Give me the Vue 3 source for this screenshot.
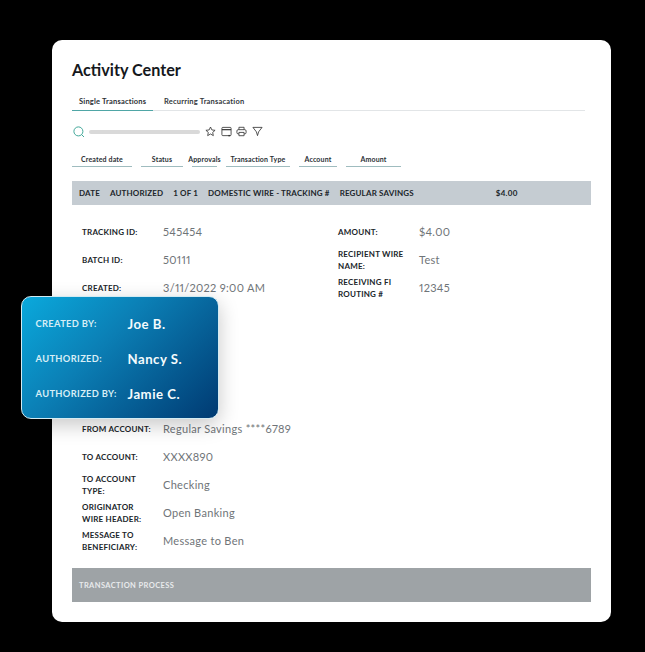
<script setup>
const filters = [
  { label: 'Created date', width: 60 },
  { label: 'Status', width: 42 },
  { label: 'Approvals', width: 25 },
  { label: 'Transaction Type', width: 64 },
  { label: 'Account', width: 38 },
  { label: 'Amount', width: 55 },
]
const leftTop = [
  { label: 'TRACKING ID:', value: '545454' },
  { label: 'BATCH ID:', value: '50111' },
  { label: 'CREATED:', value: '3/11/2022 9:00 AM' },
]
const leftBottom = [
  { label: 'FROM ACCOUNT:', value: 'Regular Savings ****6789' },
  { label: 'TO ACCOUNT:', value: 'XXXX890' },
  { label: 'TO ACCOUNT TYPE:', value: 'Checking' },
  { label: 'ORIGINATOR WIRE HEADER:', value: 'Open Banking' },
  { label: 'MESSAGE TO BENEFICIARY:', value: 'Message to Ben' },
]
const right = [
  { label: 'AMOUNT:', value: '$4.00' },
  { label: 'RECIPIENT WIRE NAME:', value: 'Test' },
  { label: 'RECEIVING FI ROUTING #', value: '12345' },
]
const people = [
  { label: 'CREATED BY:', value: 'Joe B.' },
  { label: 'AUTHORIZED:', value: 'Nancy S.' },
  { label: 'AUTHORIZED BY:', value: 'Jamie C.' },
]
</script>

<template>
  <div class="stage">
    <main class="card">
      <h1 class="title">Activity Center</h1>

      <nav class="tabs">
        <span class="tab active">Single Transactions</span>
        <span class="tab">Recurring Transacation</span>
      </nav>

      <div class="tools">
        <svg class="search" viewBox="0 0 12 12" width="12" height="12" fill="none" stroke="#2f9e8f" stroke-width="0.9">
          <circle cx="5.4" cy="5.4" r="4.5" />
          <path d="M8.6 8.6 11 11" />
        </svg>
        <div class="searchbar"></div>
        <div class="icons">
          <svg viewBox="0 0 12 12" width="11" height="11" fill="none" stroke="#333" stroke-width="0.9" stroke-linejoin="round">
            <path d="M6 1.1 7.5 4.3 11 4.7 8.4 7 9.1 10.5 6 8.7 2.9 10.5 3.6 7 1 4.7 4.5 4.3Z" />
          </svg>
          <svg viewBox="0 0 12 12" width="11" height="11" fill="none" stroke="#333" stroke-width="0.9">
            <rect x="1" y="1.5" width="10" height="9" rx="1" />
            <path d="M1 4h10" stroke-width="1.3" />
            <path d="M8 10.5h2" stroke-width="1.5" />
          </svg>
          <svg viewBox="0 0 12 12" width="11" height="11" fill="none" stroke="#333" stroke-width="0.9" stroke-linejoin="round">
            <path d="M3.2 4V1.4h5.6V4" />
            <rect x="1" y="4" width="10" height="4.6" rx="1.4" />
            <rect x="3.2" y="7" width="5.6" height="3.6" fill="#fff" />
          </svg>
          <svg viewBox="0 0 12 12" width="11" height="11" fill="none" stroke="#333" stroke-width="0.9" stroke-linejoin="round">
            <path d="M1 1.5h10L7.2 6.4 6 10.5 4.8 6.4Z" />
          </svg>
        </div>
      </div>

      <div class="filters">
        <div v-for="f in filters" :key="f.label" class="filter" :style="{ width: f.width + 'px' }">
          <span>{{ f.label }}</span>
        </div>
      </div>

      <div class="band">
        <span>DATE</span>
        <span>AUTHORIZED</span>
        <span>1 OF 1</span>
        <span>DOMESTIC WIRE - TRACKING #</span>
        <span>REGULAR SAVINGS</span>
        <span class="band-amount">$4.00</span>
      </div>

      <section class="details">
        <div class="col">
          <div v-for="r in leftTop" :key="r.label" class="row">
            <span class="label">{{ r.label }}</span>
            <span class="value">{{ r.value }}</span>
          </div>
          <div class="covered"></div>
          <div v-for="r in leftBottom" :key="r.label" class="row">
            <span class="label">{{ r.label }}</span>
            <span class="value">{{ r.value }}</span>
          </div>
        </div>
        <div class="col">
          <div v-for="r in right" :key="r.label" class="row">
            <span class="label">{{ r.label }}</span>
            <span class="value">{{ r.value }}</span>
          </div>
        </div>
      </section>

      <div class="process">TRANSACTION PROCESS</div>
    </main>

    <aside class="popup">
      <div v-for="p in people" :key="p.label" class="person">
        <span class="person-label">{{ p.label }}</span>
        <span class="person-value">{{ p.value }}</span>
      </div>
    </aside>
  </div>
</template>

<style>
html, body { margin: 0; background: #000; }
</style>

<style scoped>
.stage {
  position: relative;
  width: 645px;
  height: 652px;
  background: #000;
  padding: 40px 34px 30px 52px;
  box-sizing: border-box;
  font-family: Lato, "Noto Sans", sans-serif;
  color: #1f2328;
  overflow: hidden;
}
.card {
  height: 582px;
  box-sizing: border-box;
  background: #fff;
  border-radius: 10px;
  padding: 20px;
  display: flex;
  flex-direction: column;
}
.card > * {
  flex: none;
}
.title {
  margin: 0;
  font-size: 16.2px;
  line-height: 20px;
  font-weight: 700;
  color: #15181c;
}
.tabs {
  display: flex;
  margin-top: 9px;
  margin-right: 6px;
  border-bottom: 1px solid #e2e5e7;
  height: 22px;
  box-sizing: border-box;
  padding-top: 8px;
}
.tab {
  font-size: 7.5px;
  line-height: 10px;
  color: #33383d;
  font-weight: 700;
  letter-spacing: 0.2px;
  white-space: nowrap;
  padding-left: 11px;
}
.tab.active {
  width: 81px;
  box-sizing: border-box;
  height: 14px;
  padding-left: 7px;
  border-bottom: 1px solid #4fa6a6;
  color: #2b3035;
}
.tools {
  display: flex;
  align-items: center;
  margin-top: 14px;
  height: 13px;
  padding-left: 1px;
}
.searchbar {
  width: 111px;
  height: 4px;
  margin-left: 4px;
  background: #d9d9d9;
  border-radius: 2px;
}
.icons {
  display: flex;
  gap: 4.6px;
  margin-left: 5px;
}
.filters {
  display: flex;
  gap: 9px;
  margin-top: 14px;
}
.filter {
  height: 15px;
  padding-top: 1px;
  box-sizing: border-box;
  border-bottom: 1px solid #9fbcbf;
  font-size: 7px;
  line-height: 12px;
  font-weight: 700;
  letter-spacing: 0.15px;
  color: #2b3035;
  display: flex;
  justify-content: center;
  white-space: nowrap;
}
.band {
  margin-top: 14px;
  height: 24px;
  background: #c5ccd2;
  display: flex;
  align-items: center;
  gap: 10px;
  padding-left: 7px;
  font-size: 8px;
  font-weight: 700;
  letter-spacing: 0.15px;
  color: #20252a;
  white-space: nowrap;
}
.band-amount {
  margin-left: 72px;
  letter-spacing: 0.3px;
}
.details {
  display: grid;
  grid-template-columns: 256px 1fr;
  margin-top: 12px;
  padding-left: 10px;
}
.col {
  display: flex;
  flex-direction: column;
}
.row {
  display: flex;
  align-items: center;
  height: 28px;
}
.label {
  width: 81px;
  padding: 3px 6px 0 0;
  box-sizing: border-box;
  font-size: 8px;
  line-height: 11.5px;
  font-weight: 700;
  letter-spacing: 0.22px;
  color: #20252a;
}
.value {
  font-size: 11px;
  letter-spacing: 0.3px;
  font-variant-numeric: proportional-nums;
  color: #6f7478;
  white-space: nowrap;
}
.covered {
  height: 113px;
}
.process {
  margin-top: 14px;
  height: 34px;
  background: #9ea3a6;
  display: flex;
  align-items: center;
  padding-left: 7px;
  font-size: 7.5px;
  font-weight: 700;
  letter-spacing: 0.4px;
  color: #e8eaec;
}
.popup {
  position: absolute;
  left: 21px;
  top: 296px;
  width: 198px;
  height: 123px;
  box-sizing: border-box;
  border: 1.5px solid #d3ebf2;
  border-radius: 10px;
  background: linear-gradient(135deg, #0aa9dc 0%, #0b7fb5 40%, #003a72 100%);
  box-shadow: 0 6px 20px rgba(0, 0, 0, 0.22);
  padding: 12px 13.5px 10px;
  display: flex;
  flex-direction: column;
  justify-content: center;
  gap: 11px;
}
.person {
  display: flex;
  align-items: center;
  height: 24px;
}
.person-label {
  width: 92px;
  flex: none;
  font-size: 9.3px;
  font-weight: 700;
  letter-spacing: 0.35px;
  color: #d7eef6;
  white-space: nowrap;
}
.person-value {
  font-size: 13.2px;
  font-weight: 700;
  letter-spacing: 0.5px;
  color: #f4fbfd;
  white-space: nowrap;
}
</style>
